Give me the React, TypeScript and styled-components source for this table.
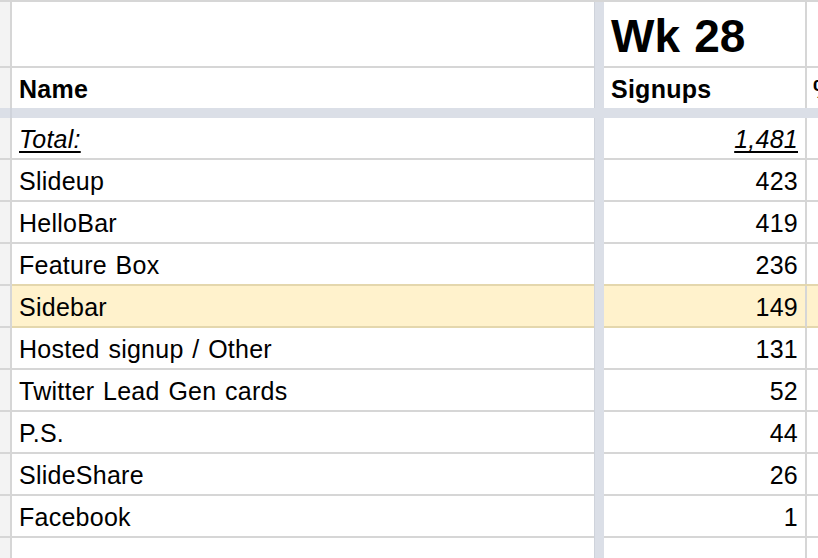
import React from "react";
import styled, { createGlobalStyle, css } from "styled-components";

const LINE = "#d6d6d6";
const HL_BG = "#fff2cc";
const HL_LINE = "#e4d7ad";
const FREEZE = "#dbdfe7";

const Global = createGlobalStyle`
  html, body { margin: 0; padding: 0; background: #fff; overflow: hidden; }
  * { box-sizing: border-box; }
`;

const Sheet = styled.div`
  width: 818px;
  height: 558px;
  overflow: hidden;
  display: flex;
  flex-direction: column;
  border-top: 2px solid ${LINE};
  font-family: "Liberation Sans", Arial, sans-serif;
  color: #000;
`;

const Row = styled.div<{ $h: number }>`
  display: flex;
  flex: none;
  height: ${(p) => p.$h}px;
`;

const Gutter = styled.div<{ $line?: boolean }>`
  flex: none;
  width: 12px;
  background: #f3f3f3;
  border-right: 2px solid ${LINE};
  ${(p) => p.$line && css`border-bottom: 2px solid ${LINE};`}
`;

const FreezeCol = styled.div`
  flex: none;
  width: 10px;
  background: ${FREEZE};
  border-left: 1px solid #cfd3db;
`;

const FreezeRow = styled.div`
  flex: none;
  height: 10px;
  display: flex;
  background: ${FREEZE};
`;

const FreezeGutter = styled.div`
  width: 12px;
  border-right: 2px solid #cfd3db;
`;

type CellProps = {
  $w?: number;
  $align?: "left" | "right";
  $size?: number;
  $bold?: boolean;
  $pb?: number;
  $pl?: number;
  $line?: boolean;
  $hl?: boolean;
  $right?: boolean;
};

const Cell = styled.div<CellProps>`
  ${(p) => (p.$w ? css`flex: none; width: ${p.$w}px;` : css`flex: 1; min-width: 0;`)}
  display: flex;
  align-items: flex-end;
  justify-content: ${(p) => (p.$align === "right" ? "flex-end" : "flex-start")};
  padding: 0 7px ${(p) => p.$pb ?? 4}px ${(p) => p.$pl ?? 7}px;
  font-size: ${(p) => p.$size ?? 25}px;
  font-weight: ${(p) => (p.$bold ? 700 : 400)};
  letter-spacing: ${(p) => (p.$size ? 0 : 0.25)}px;
  word-spacing: 1.5px;
  line-height: 1.15;
  white-space: nowrap;
  overflow: hidden;
  background: ${(p) => (p.$hl ? HL_BG : "#fff")};
  ${(p) => p.$right && css`border-right: 2px solid ${LINE};`}
  ${(p) => p.$line && css`border-bottom: 2px solid ${p.$hl ? HL_LINE : LINE};`}
  ${(p) => p.$hl && css`box-shadow: 0 -2px 0 ${HL_LINE};`}
`;

const Underlined = styled.span`
  font-style: italic;
  text-decoration: underline;
  text-decoration-thickness: 2px;
  text-underline-offset: 3px;
`;

const rows: { name: string; value: string; hl?: boolean }[] = [
  { name: "Slideup", value: "423" },
  { name: "HelloBar", value: "419" },
  { name: "Feature Box", value: "236" },
  { name: "Sidebar", value: "149", hl: true },
  { name: "Hosted signup / Other", value: "131" },
  { name: "Twitter Lead Gen cards", value: "52" },
  { name: "P.S.", value: "44" },
  { name: "SlideShare", value: "26" },
  { name: "Facebook", value: "1" },
  { name: "", value: "" },
];

export default function App() {
  return (
    <>
      <Global />
      <Sheet>
        <Row $h={66}>
          <Gutter $line />
          <Cell $w={582} $line />
          <FreezeCol />
          <Cell $w={203} $size={46} $bold $pb={3} $line $right>
            Wk 28
          </Cell>
          <Cell $line />
        </Row>
        <Row $h={40}>
          <Gutter />
          <Cell $w={582} $bold $pb={4}>
            Name
          </Cell>
          <FreezeCol />
          <Cell $w={203} $bold $pb={4} $right>
            Signups
          </Cell>
          <Cell $bold $pb={4} $pl={6}>
            % of total
          </Cell>
        </Row>
        <FreezeRow>
          <FreezeGutter />
        </FreezeRow>
        <Row $h={42}>
          <Gutter $line />
          <Cell $w={582} $line>
            <Underlined>Total:</Underlined>
          </Cell>
          <FreezeCol />
          <Cell $w={203} $align="right" $line $right>
            <Underlined>1,481</Underlined>
          </Cell>
          <Cell $line />
        </Row>
        {rows.map((r, i) => (
          <Row $h={42} key={i}>
            <Gutter $line />
            <Cell $w={582} $line $hl={r.hl}>
              {r.name}
            </Cell>
            <FreezeCol />
            <Cell $w={203} $align="right" $line $hl={r.hl} $right>
              {r.value}
            </Cell>
            <Cell $line $hl={r.hl} />
          </Row>
        ))}
      </Sheet>
    </>
  );
}
